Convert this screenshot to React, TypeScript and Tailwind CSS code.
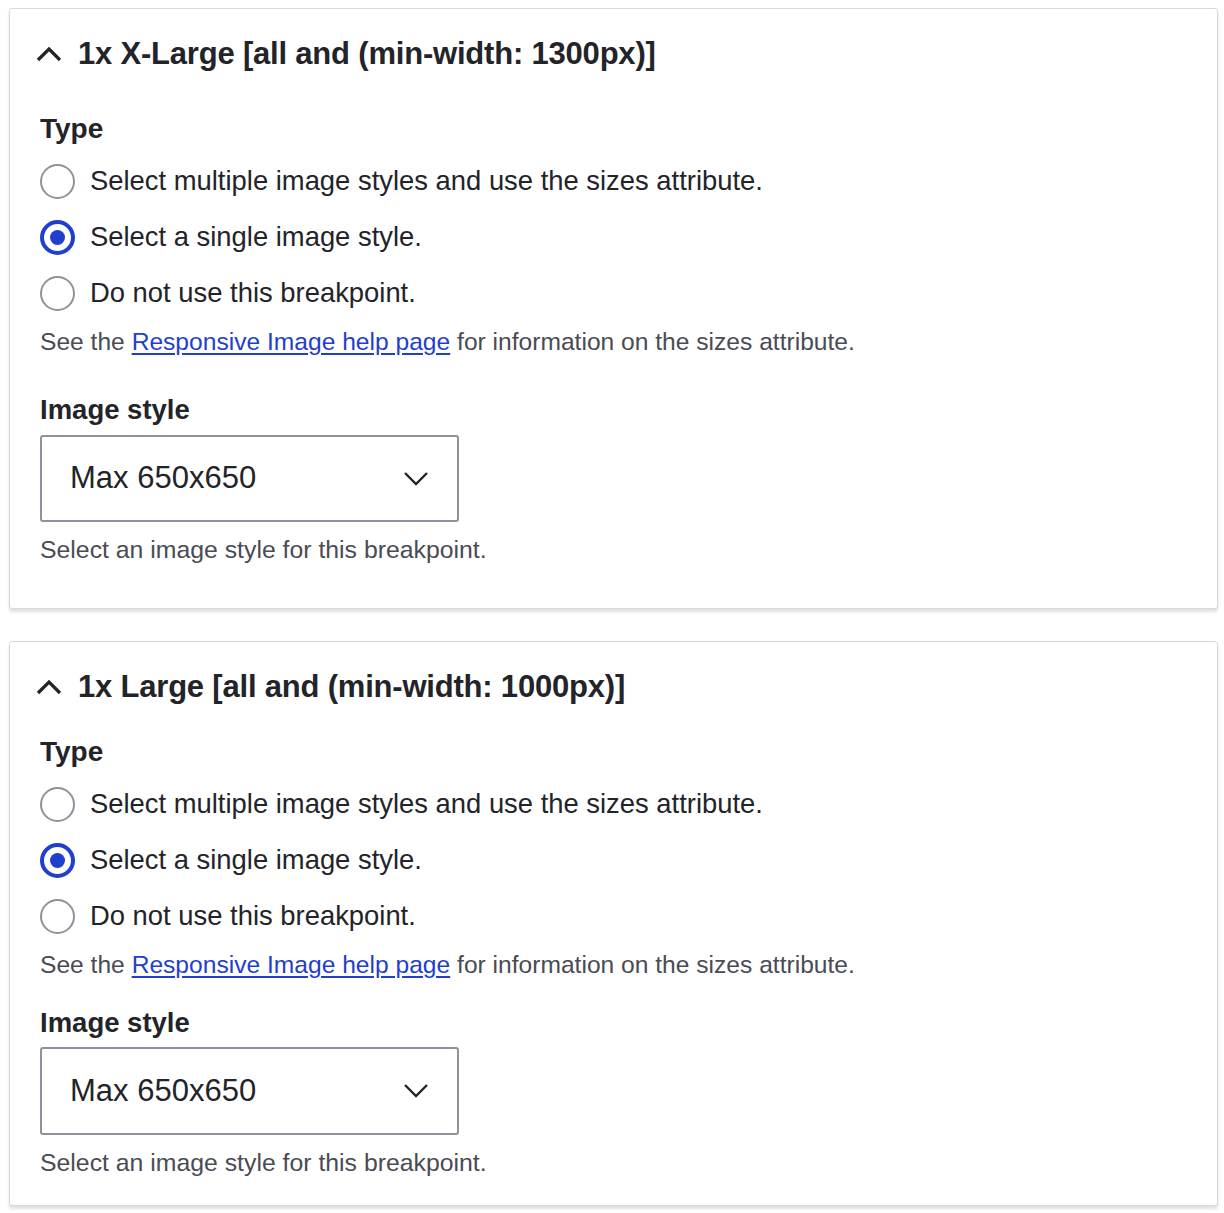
import { useState } from "react";

const font = { fontFamily: '"Liberation Sans", Arial, sans-serif' };

const OPTIONS = [
  { id: "sizes", label: "Select multiple image styles and use the sizes attribute." },
  { id: "image_style", label: "Select a single image style." },
  { id: "_none", label: "Do not use this breakpoint." },
];

function Radio({ checked }: { checked: boolean }) {
  return checked ? (
    <span className="w-[35px] h-[35px] rounded-full border-[4px] border-[#1f3fcc] bg-white flex items-center justify-center flex-shrink-0">
      <span className="w-[15px] h-[15px] rounded-full bg-[#1f3fcc]" />
    </span>
  ) : (
    <span className="w-[35px] h-[35px] rounded-full border-2 border-[#8e929c] bg-white flex-shrink-0" />
  );
}

function Breakpoint({ title, compact }: { title: string; compact?: boolean }) {
  const [type, setType] = useState("image_style");

  return (
    <details
      open
      className={`bg-white border border-[#d8d9e0] rounded-[3px] shadow-[0_3px_3px_rgba(0,0,0,0.12)] ${
        compact ? "pb-[28px]" : "pb-[44px]"
      }`}
    >
      <summary className="list-none flex items-center gap-[16px] pl-[26px] pt-[27px] text-[31px] leading-[36px] font-bold text-[#232429] tracking-[-0.2px] cursor-pointer">
        <svg width="26" height="16" viewBox="0 0 26 16" fill="none">
          <path d="M2 14L13 3L24 14" stroke="#232429" strokeWidth="3.2" />
        </svg>
        {title}
      </summary>

      <div className="px-[30px]">
        <div
          className={`text-[28px] leading-[30px] font-bold text-[#232429] ${
            compact ? "mt-[32px]" : "mt-[42px]"
          }`}
        >
          Type
        </div>
        <div className="mt-[15px] flex flex-col gap-[12px]">
          {OPTIONS.map((o) => (
            <label
              key={o.id}
              className="flex items-center gap-[15px] h-[44px] text-[27.4px] text-[#232429] cursor-pointer"
              onClick={() => setType(o.id)}
            >
              <Radio checked={type === o.id} />
              {o.label}
            </label>
          ))}
        </div>
        <p className="mt-[12px] text-[24.6px] leading-[30px] text-[#4a4b55]">
          See the{" "}
          <a href="#" className="text-[#1f3fcc] underline underline-offset-[3px]">
            Responsive Image help page
          </a>{" "}
          for information on the sizes attribute.
        </p>

        <div
          className={`text-[27.5px] leading-[30px] font-bold text-[#232429] ${
            compact ? "mt-[28px]" : "mt-[38px]"
          }`}
        >
          Image style
        </div>
        <div
          className={`w-[419px] border-2 border-[#8e929c] rounded-[3px] flex items-center justify-between pl-[28px] pr-[28px] text-[31px] text-[#232429] ${
            compact ? "mt-[9px] h-[88px]" : "mt-[10px] h-[87px]"
          }`}
        >
          Max 650x650
          <svg width="26" height="16" viewBox="0 0 26 16" fill="none">
            <path d="M2 2L13 13L24 2" stroke="#232429" strokeWidth="2.4" />
          </svg>
        </div>
        <p className="mt-[14px] text-[24.8px] leading-[28px] text-[#4a4b55]">
          Select an image style for this breakpoint.
        </p>
      </div>
    </details>
  );
}

export default function App() {
  return (
    <div style={font} className="bg-white min-h-[1213px] pt-[8px] pl-[9px] pr-[6px]">
      <Breakpoint title="1x X-Large [all and (min-width: 1300px)]" />
      <div className="mt-[32px]">
        <Breakpoint title="1x Large [all and (min-width: 1000px)]" compact />
      </div>
    </div>
  );
}
